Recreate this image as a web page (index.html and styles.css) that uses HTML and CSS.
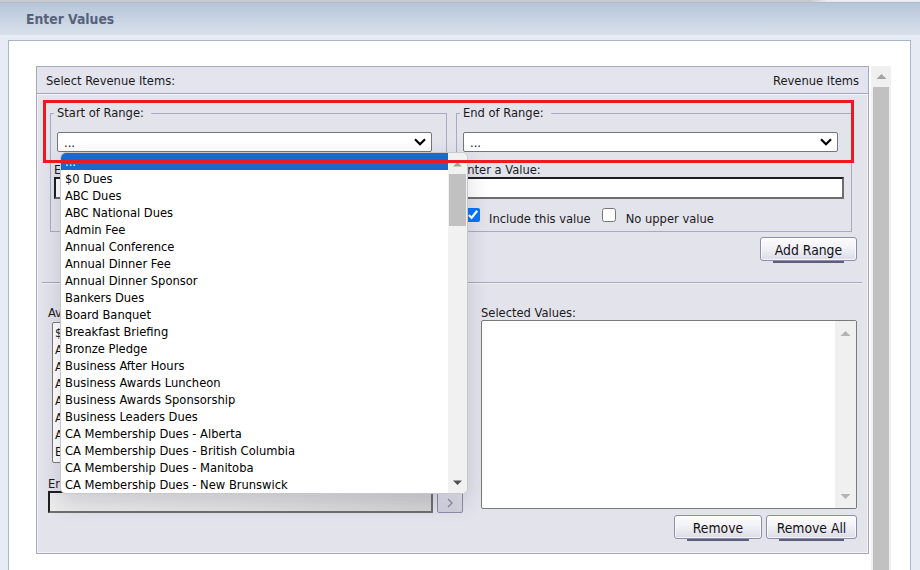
FILE: index.html
```html
<!DOCTYPE html>
<html>
<head>
<meta charset="utf-8">
<title>Enter Values</title>
<link rel="stylesheet" href="styles.css">
</head>
<body>
<div class="page">
  <div class="topstrip"></div>
  <div class="titlebar">Enter Values</div>
  <div class="window">
    <div class="scrollwrap">
      <div class="panel">
        <div class="panel-head"><span>Select Revenue Items:</span><span>Revenue Items</span></div>
        <div class="panel-body">
          <div class="ranges">
            <fieldset class="range">
              <legend>Start of Range:</legend>
              <div class="select"><span>...</span>
                <svg class="chev" width="12" height="8" viewBox="0 0 12 8"><path d="M1 1.2 L6 6.2 L11 1.2" fill="none" stroke="#000" stroke-width="2.2"/></svg>
              </div>
              <div class="lbl">Enter a Value:</div>
              <div class="input"></div>
              <div class="checks">
                <input type="checkbox" class="cb" checked><span class="cbl">Include this value</span>
                <input type="checkbox" class="cb cb2"><span class="cbl">No lower value</span>
              </div>
            </fieldset>
            <fieldset class="range">
              <legend>End of Range:</legend>
              <div class="select"><span>...</span>
                <svg class="chev" width="12" height="8" viewBox="0 0 12 8"><path d="M1 1.2 L6 6.2 L11 1.2" fill="none" stroke="#000" stroke-width="2.2"/></svg>
              </div>
              <div class="lbl">Enter a Value:</div>
              <div class="input"></div>
              <div class="checks">
                <input type="checkbox" class="cb" checked><span class="cbl">Include this value</span>
                <input type="checkbox" class="cb cb2"><span class="cbl">No upper value</span>
              </div>
            </fieldset>
          </div>
          <div class="addrow"><button class="btn btn-add">Add Range</button></div>
          <div class="sep"></div>
          <div class="lists">
            <div class="col-left">
              <div class="lbl">Available Values:</div>
              <div class="listbox avail">
                <div>$0 Dues</div>
                <div>ABC Dues</div>
                <div>ABC National Dues</div>
                <div>Admin Fee</div>
                <div>Annual Conference</div>
                <div>Annual Dinner Fee</div>
                <div>Annual Dinner Sponsor</div>
                <div>Bankers Dues</div>
              </div>
              <div class="lbl lbl-enter">Enter a Value:</div>
              <div class="inrow">
                <div class="input grad"></div>
                <button class="arrowbtn"><svg width="10" height="12" viewBox="0 0 10 12"><path d="M3 2 L7 6 L3 10" fill="none" stroke="#8c8c98" stroke-width="1.3"/></svg></button>
              </div>
            </div>
            <div class="col-right">
              <div class="lbl">Selected Values:</div>
              <div class="listbox selbox">
                <div class="sb">
                  <svg width="11" height="7" viewBox="0 0 11 7"><path d="M0.5 6 L5.5 1 L10.5 6 Z" fill="#b4b4b4"/></svg>
                  <svg width="11" height="7" viewBox="0 0 11 7"><path d="M0.5 1 L5.5 6 L10.5 1 Z" fill="#b4b4b4"/></svg>
                </div>
              </div>
              <div class="btnrow">
                <button class="btn btn-rm">Remove</button>
                <button class="btn btn-rma">Remove All</button>
              </div>
            </div>
          </div>
        </div>
      </div>
      <div class="vscroll">
        <svg class="vs-up" width="11" height="7" viewBox="0 0 11 7"><path d="M0.5 6 L5.5 1 L10.5 6 Z" fill="#a3a3a3"/></svg>
        <div class="vs-thumb"></div>
      </div>
    </div>
  </div>

  <div class="dropdown">
    <div class="dd-list">
      <div class="opt on">...</div>
      <div class="opt">$0 Dues</div>
      <div class="opt">ABC Dues</div>
      <div class="opt">ABC National Dues</div>
      <div class="opt">Admin Fee</div>
      <div class="opt">Annual Conference</div>
      <div class="opt">Annual Dinner Fee</div>
      <div class="opt">Annual Dinner Sponsor</div>
      <div class="opt">Bankers Dues</div>
      <div class="opt">Board Banquet</div>
      <div class="opt">Breakfast Briefing</div>
      <div class="opt">Bronze Pledge</div>
      <div class="opt">Business After Hours</div>
      <div class="opt">Business Awards Luncheon</div>
      <div class="opt">Business Awards Sponsorship</div>
      <div class="opt">Business Leaders Dues</div>
      <div class="opt">CA Membership Dues - Alberta</div>
      <div class="opt">CA Membership Dues - British Columbia</div>
      <div class="opt">CA Membership Dues - Manitoba</div>
      <div class="opt">CA Membership Dues - New Brunswick</div>
    </div>
    <div class="dd-scroll">
      <svg class="dd-up" width="9" height="6" viewBox="0 0 9 6"><path d="M0 5.5 L4.5 1 L9 5.5 Z" fill="#a3a3a3"/></svg>
      <div class="dd-thumb"></div>
      <div class="dd-fill"></div>
      <svg class="dd-down" width="9" height="6" viewBox="0 0 9 6"><path d="M0 0.5 L4.5 5 L9 0.5 Z" fill="#505050"/></svg>
    </div>
  </div>

  <div class="redbox"></div>
</div>
</body>
</html>
```

FILE: styles.css
```css
* { box-sizing: border-box; }

html, body {
  margin: 0;
  padding: 0;
}

body {
  background: #e7ebf3;
  font-family: "DejaVu Sans Condensed", "DejaVu Sans", sans-serif;
  font-stretch: condensed;
  font-size: 12.8px;
  color: #111;
  overflow: hidden;
}

.page {
  position: relative;
  width: 920px;
  height: 570px;
  overflow: hidden;
}

.topstrip {
  height: 3px;
  background: linear-gradient(to right, #c6cad2 0%, #c6cad2 88%, #e9ecf1 90%, #e9ecf1 100%);
  border-bottom: 1px solid #b3bccb;
}

.titlebar {
  height: 32px;
  line-height: 33px;
  padding-left: 26px;
  font-weight: bold;
  font-size: 13.8px;
  color: #56617a;
  background: linear-gradient(to bottom, #b7c5d9 0%, #c8d3e3 50%, #d9e0ec 100%);
}

.window {
  margin-top: 5px;
  margin-left: 8px;
  width: 903px;
  height: 540px;
  background: #fff;
  border: 1px solid #a9b5cc;
  padding: 25px 0 0 27px;
}

.scrollwrap {
  display: flex;
  align-items: flex-start;
  gap: 2px;
}

.panel {
  width: 833px;
  height: 488px;
  border: 1px solid #a7a7bf;
  background: #e3e3ec;
  display: flex;
  flex-direction: column;
}

.panel-head {
  height: 27px;
  border-bottom: 1px solid #a7a7bf;
  background: #e4e4ee;
  display: flex;
  justify-content: space-between;
  align-items: center;
  padding: 1px 9px 0 9px;
  color: #1a1a1a;
}

.panel-body {
  flex: 1;
  border: 1px solid #f4f4f8;
  background: #e3e3ec;
}

/* ranges */
.ranges {
  display: grid;
  grid-template-columns: 397px 396px;
  column-gap: 9px;
  padding: 10px 0 0 12px;
}

.range {
  margin: 0;
  min-width: 0;
  border: 1px solid #a9a9bf;
  padding: 0 3px 5px 3px;
}

.range legend {
  padding: 0 7px 0 3px;
  line-height: 16px;
  color: #1a1a1a;
}

.select {
  margin-top: 11px;
  margin-left: 3px;
  width: 375px;
  height: 20px;
  border: 1px solid #767676;
  border-radius: 2px;
  background: #fff;
  display: flex;
  align-items: center;
  justify-content: space-between;
  padding: 0 5px 0 6px;
}

.select span {
  line-height: 16px;
  padding-top: 1px;
}

.lbl {
  line-height: 15px;
  color: #1a1a1a;
}

.range .lbl {
  margin-top: 10px;
}

.input {
  width: 384px;
  height: 22px;
  background: #fff;
  border-style: solid;
  border-width: 2px;
  border-color: #1e1e1e #6e6e6e #6e6e6e #1e1e1e;
}

.checks {
  margin-top: 9px;
  display: flex;
  align-items: flex-start;
  height: 18px;
}

.cb {
  margin: 0 9px 0 6px;
  width: 14px;
  height: 14px;
  accent-color: #0075ff;
}

.cb2 {
  margin-left: 11px;
  margin-right: 10px;
}

.cbl {
  margin-top: 3px;
  line-height: 15px;
  color: #1a1a1a;
}

/* buttons */
.addrow {
  display: flex;
  justify-content: flex-end;
  padding-right: 10px;
  margin-top: 5px;
}

.btn {
  position: relative;
  height: 24px;
  padding: 1px 0 0 0;
  font-family: inherit;
  font-stretch: condensed;
  font-size: 13.8px;
  color: #111;
  border: 1px solid #8d8da9;
  border-radius: 3px;
  background: linear-gradient(to bottom, #fdfdff 0%, #f1f1f7 45%, #dcdce8 100%);
  box-shadow: inset 0 0 0 1px rgba(255,255,255,0.7);
}

.btn::after {
  content: "";
  position: absolute;
  left: 12px;
  right: 12px;
  bottom: -3px;
  height: 2px;
  background: #5d5d7c;
}

.btn-add { width: 97px; }
.btn-rm { width: 88px; }
.btn-rma { width: 91px; }

.sep {
  margin: 21px 5px 0 4px;
  border-top: 1px solid #a6a6ba;
  border-bottom: 1px solid #f2f2f6;
}

/* lists */
.lists {
  display: grid;
  grid-template-columns: 415px 376px;
  column-gap: 18px;
  padding: 21px 0 0 10px;
}

.listbox {
  background: #fff;
  border: 1px solid #7a7a7a;
  border-radius: 2px;
}

.avail {
  margin: 2px 0 0 4px;
  width: 380px;
  height: 141px;
  padding: 1px 0 0 2px;
  line-height: 17px;
  overflow: hidden;
}

.lbl-enter {
  margin-top: 13px;
}

.inrow {
  display: flex;
  align-items: flex-start;
  gap: 4px;
}

.input.grad {
  width: 385px;
  background: linear-gradient(to right, #ececec 0%, #e2e2e2 50%, #d4d4d4 100%);
}

.arrowbtn {
  margin-top: 1px;
  width: 26px;
  height: 21px;
  padding: 0;
  border: 1px solid #8d8da9;
  border-radius: 2px;
  background: linear-gradient(to bottom, #e4e4ee, #cfcfdc);
  display: flex;
  align-items: center;
  justify-content: center;
}

.selbox {
  height: 189px;
  display: flex;
  justify-content: flex-end;
  overflow: hidden;
}

.sb {
  width: 21px;
  height: 100%;
  background: #f0f0f0;
  display: flex;
  flex-direction: column;
  justify-content: space-between;
  align-items: center;
  padding: 9px 0 8px 0;
}

.btnrow {
  margin-top: 6px;
  display: flex;
  justify-content: flex-end;
  gap: 4px;
}

/* page scrollbar */
.vscroll {
  width: 20px;
  height: 520px;
  background: #f0f0f0;
  display: flex;
  flex-direction: column;
  align-items: center;
  padding-top: 7px;
}

.vs-thumb {
  margin-top: 7px;
  width: 16px;
  flex: 1;
  background: #c1c1c1;
}

/* open dropdown (overlay) */
.dropdown {
  position: absolute;
  left: 60px;
  top: 152px;
  width: 408px;
  height: 342px;
  z-index: 5;
  display: flex;
  background: #fff;
  border: 1px solid #c8c8c8;
  border-radius: 6px;
  overflow: hidden;
  box-shadow: 0 8px 22px rgba(40, 40, 80, 0.16);
}

.dd-list {
  flex: 1;
}

.opt {
  height: 17px;
  line-height: 17px;
  padding-left: 4px;
  white-space: nowrap;
  color: #000;
}

.opt.on {
  background: #1b68cf;
  color: #fff;
}

.dd-scroll {
  width: 19px;
  background: #f1f1f1;
  display: flex;
  flex-direction: column;
  align-items: center;
  padding: 8px 0 7px 0;
}

.dd-thumb {
  margin-top: 7px;
  width: 17px;
  height: 52px;
  background: #c1c1c1;
}

.dd-fill {
  flex: 1;
}

/* annotation overlay */
.redbox {
  position: absolute;
  left: 43px;
  top: 100px;
  width: 811px;
  height: 63px;
  border: 3px solid #e81b24;
  z-index: 6;
  pointer-events: none;
}
```
